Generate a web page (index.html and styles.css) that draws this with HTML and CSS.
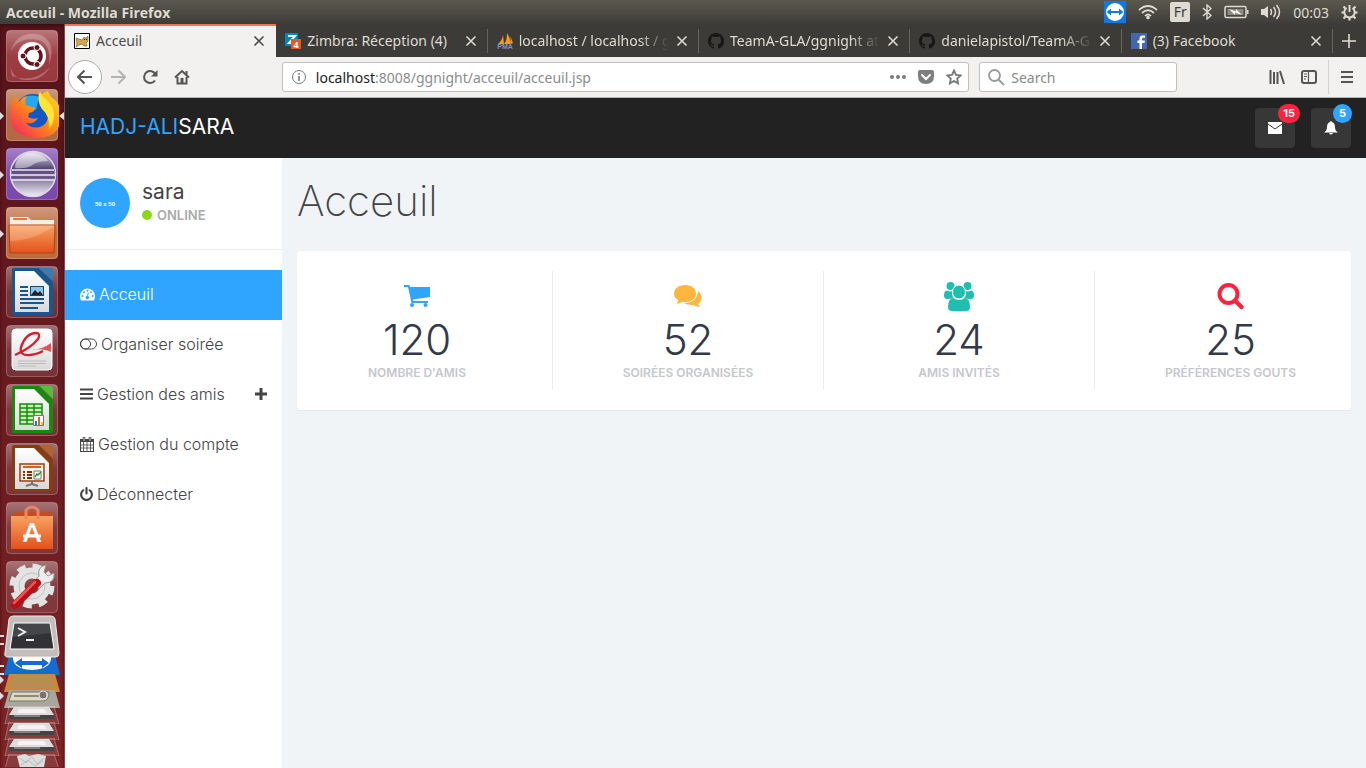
FILE: index.html
```html
<!DOCTYPE html>
<html lang="fr">
<head>
<meta charset="utf-8">
<title>Acceuil</title>
<link rel="stylesheet" href="styles.css">
</head>
<body>
<svg class="defs" width="0" height="0" aria-hidden="true">
  <defs>
    <linearGradient id="gloss" x1="0" y1="0" x2="0" y2="1"><stop offset="0" stop-color="#fff" stop-opacity=".38"/><stop offset=".5" stop-color="#fff" stop-opacity=".12"/><stop offset="1" stop-color="#fff" stop-opacity=".1"/></linearGradient>
    <linearGradient id="orange" x1="0" y1="0" x2="0" y2="1"><stop offset="0" stop-color="#f7a261"/><stop offset="1" stop-color="#e4511b"/></linearGradient>
    <linearGradient id="fox" x1="1" y1="0" x2="0" y2="1"><stop offset="0" stop-color="#ffe226"/><stop offset=".5" stop-color="#ff8a16"/><stop offset="1" stop-color="#f5156c"/></linearGradient>
    <linearGradient id="orb" x1="0" y1="0" x2="0" y2="1"><stop offset="0" stop-color="#e9e4f1"/><stop offset=".4" stop-color="#4b3d69"/><stop offset="1" stop-color="#f2eff7"/></linearGradient>
    <linearGradient id="paper" x1="0" y1="0" x2="0" y2="1"><stop offset="0" stop-color="#fff"/><stop offset="1" stop-color="#d9d9d9"/></linearGradient>
    <symbol id="tile" viewBox="0 0 54 54"><rect x="1.5" y="1.5" width="51" height="51" rx="4" fill="url(#gloss)" stroke="#fff" stroke-opacity=".25"/></symbol>
    <symbol id="close" viewBox="0 0 12 12"><path d="M1.500 1.500l9 9m0-9l-9 9" fill="none" stroke="currentColor" stroke-width="1.600"/></symbol>
    <symbol id="github" viewBox="0 0 16 16"><path fill="#171717" d="M8 0C3.580 0 0 3.580 0 8c0 3.540 2.290 6.530 5.470 7.590.4.070.550-.170.550-.380 0-.190-.010-.820-.010-1.490-2.010.370-2.530-.490-2.690-.940-.090-.230-.480-.940-.820-1.130-.280-.150-.680-.520-.010-.530.630-.010 1.080.580 1.230.820.720 1.210 1.870.870 2.330.660.070-.520.280-.870.510-1.070-1.780-.2-3.640-.890-3.640-3.950 0-.870.310-1.590.820-2.150-.080-.2-.360-1.020.080-2.120 0 0 .670-.210 2.200.820.640-.180 1.320-.270 2-.270.680 0 1.360.090 2 .270 1.530-1.040 2.200-.820 2.200-.820.440 1.100.160 1.920.080 2.120.510.560.820 1.270.820 2.150 0 3.070-1.870 3.750-3.650 3.950.290.250.540.730.540 1.480 0 1.070-.010 1.930-.010 2.200 0 .210.150.460.550.380A8.013 8.013 0 0016 8c0-4.420-3.580-8-8-8z"/></symbol>
    <symbol id="drive" viewBox="0 0 64 18"><path d="M9 0h45l5 18H5z" fill="#fff" fill-opacity=".1" stroke="#fff" stroke-opacity=".3"/><path d="M14 1h35l5 8v3H9V9z" fill="#ddd"/><path d="M9 9h45v4H9z" fill="#444"/><path d="M14 10h26" stroke="#bbb"/><path d="M19 3h25l3 4H17z" fill="#f3f3f3"/></symbol>
  </defs>
</svg>

<header class="panelbar">
  <strong class="window-title">Acceuil - Mozilla Firefox</strong>
  <div class="indicators">
    <svg width="22" height="22" viewBox="0 0 22 22"><path d="M0 0h22v22H0z" fill="#0f7ae5"/><circle cx="11" cy="11" r="9" fill="#fff"/><path d="M2.500 11l4.500-3.500v2.500h8V7.500l4.500 3.500-4.500 3.500V12H7v2.500z" fill="#0f7ae5"/></svg>
    <svg width="20" height="16" viewBox="0 0 20 16" fill="none" stroke="#dfdbd2" stroke-width="1.700"><path d="M1 6q9-8 18 0M4 9q6-5.500 12 0M7 12q3-3 6 0" /><circle cx="10" cy="13.500" r="1" fill="#dfdbd2"/></svg>
    <span class="layout">Fr</span>
    <svg width="10" height="16" viewBox="0 0 10 16" fill="none" stroke="#dfdbd2" stroke-width="1.400"><path d="M1 4l8 7.500L5 15V1l4 3.500L1 12"/></svg>
    <svg width="25" height="14" viewBox="0 0 25 14"><rect x="1" y="1.500" width="21" height="11" rx="1.500" fill="none" stroke="#dfdbd2" stroke-width="1.500"/><path d="M3.500 4h16v6h-16z" fill="#8d8a83"/><path d="M23 5h1.500v4H23z" fill="#dfdbd2"/><path d="M5 4l7 2.500V4l6 6-7-2.500V10z" fill="#f7f5f0"/></svg>
    <svg width="20" height="16" viewBox="0 0 20 16" fill="none" stroke="#dfdbd2" stroke-width="1.500"><path d="M0 5h3l4-3v12l-4-3H0z" fill="#dfdbd2" stroke="none"/><path d="M9.500 5q2 3 0 6M12.500 3q4 5 0 10M15.500 1q6 7 0 14"/></svg>
    <time>00:03</time>
    <svg width="17" height="17" viewBox="0 0 17 17" fill="none" stroke="#dfdbd2"><path d="M5.500 4a5.200 5.200 0 1 0 6 0" stroke-width="2"/><path d="M8.500 1v7" stroke-width="2"/><path d="M.5 8.500h3m10 0h3M2.500 2.500l2 2M14.500 2.500l-2 2M2.500 14.500l2-2M14.500 14.500l-2-2M8.500 13.500v3" stroke-width="2.200"/></svg>
  </div>
</header>

<div class="desktop">
  <nav class="launcher" aria-label="Lanceur">
    <button class="app" aria-label="Ubuntu"><svg viewBox="0 0 54 54"><rect x="1" y="1" width="52" height="52" rx="4" fill="#8e2329"/><path d="M5 24Q12 0 36 6q16 8 8 30 2-21-10-25Q12 7 5 24zm2 23q22 8 38-9-8 14-24 13-12 0-16-14z" fill="#fff" opacity=".25"/><use href="#tile"/><circle cx="27" cy="27" r="14" fill="#fff"/><circle cx="28" cy="27" r="8" fill="none" stroke="#66131b" stroke-width="3.500" stroke-dasharray="14.500 2.250" stroke-dashoffset="7"/><g fill="#66131b" stroke="#fff"><circle cx="18" cy="27" r="3"/><circle cx="32" cy="18.500" r="3"/><circle cx="32" cy="35.500" r="3"/></g></svg></button>
    <button class="app running focused" aria-label="Firefox"><svg viewBox="0 0 54 54"><rect x="1" y="1" width="52" height="52" rx="4" fill="#a9582f"/><use href="#tile"/><circle cx="28" cy="24" r="18" fill="#1257c4"/><path d="M16 12q8-7 18-3l-3 13-9-4z" fill="#25a8f4"/><path d="M9 8q3 2 5 6 3-5 8-6-3 4-1 9l9 3q0 4-6 5l-1 4q5 3 10 1-4 7-12 5 5 6 14 4 9-3 8-14-4-3-8-9-4-9 8-13 1 5 7 9 6 6 6 15 0 22-23 23Q5 49 5 27 5 15 9 8z" fill="url(#fox)"/><path d="M35 3q1 5 7 9 7 6 7 15 0 8-5 14 1-13-7-20-6-9-2-18z" fill="#ffe43a"/></svg></button>
    <button class="app running" aria-label="Eclipse"><svg viewBox="0 0 54 54"><rect x="1" y="1" width="52" height="52" rx="4" fill="#6c33a3"/><use href="#tile"/><circle cx="28" cy="27" r="22.500" fill="url(#orb)" stroke="#ded7e9" stroke-width="1.500"/><path d="M10 21Q11 7 27 6q12 1 16 8-12 0-17 5-6 3-16 2z" fill="#fff" opacity=".45"/><path d="M7 23h42M6 28h44M7 33h42" stroke="#eee9f5" stroke-width="1.500"/><path d="M7 25.500h42M6 30.500h44" stroke="#66508a" stroke-width="2"/></svg></button>
    <button class="app running" aria-label="Fichiers"><svg viewBox="0 0 54 54"><rect x="1" y="1" width="52" height="52" rx="4" fill="#b35b2b"/><use href="#tile"/><path d="M5 19v-8h18l3 3h23v5z" fill="#f5eee6"/><path d="M8 13h14" stroke="#e77a37" stroke-width="2"/><path d="M4 19h46l-1 28H5z" fill="url(#orange)" stroke="#b7400f"/><path d="M5 35Q30 34 49 20v-1H5z" fill="#fff" opacity=".2"/></svg></button>
    <button class="app" aria-label="LibreOffice Writer"><svg viewBox="0 0 54 54"><use href="#tile"/><path d="M7 5q0-2 2-2h25l14 14v31q0 2-2 2H9q-2 0-2-2z" fill="#15588f"/><path d="M35 3h11q2 0 2 2v11z" fill="#367db5"/><path d="M10 6h19l15 15v26H10z" fill="url(#paper)"/><path d="M15 22h8m-8 4h8m-8 4h8m-8 4h24m-24 4h24m-24 5h18" stroke="#15588f" stroke-width="1.800"/><path d="M25 21h14v10H25z" fill="#164a73"/><path d="M26 30v-8h12v8z" fill="#8bc7ec"/><path d="M26 30l4-5 3 3 2-2 3 4z" fill="#222"/></svg></button>
    <button class="app" aria-label="Lecteur PDF"><svg viewBox="0 0 54 54"><use href="#tile"/><rect x="7" y="5" width="40" height="41" rx="4" fill="url(#paper)" stroke="#fff"/><path d="M10 31q16-7 23-16 3-6-2-6-10 0-15 14-2 9 9 8 8-1 13-4" fill="none" stroke="#d51f2b" stroke-width="2.300"/><path d="M25 26q12 0 21-7v9q-8-4-21-2z" fill="#e2525b"/><path d="M13 37h28m-28 2.500h28M13 42h18" stroke="#bbb"/></svg></button>
    <button class="app" aria-label="LibreOffice Calc"><svg viewBox="0 0 54 54"><use href="#tile"/><path d="M7 5q0-2 2-2h25l14 14v31q0 2-2 2H9q-2 0-2-2z" fill="#19880f"/><path d="M35 3h11q2 0 2 2v11z" fill="#54bd3c"/><path d="M10 6h19l15 15v26H10z" fill="url(#paper)"/><path d="M15 21h22v20H15z" fill="#c9f5ad" stroke="#168c12" stroke-width="1.500"/><path d="M15 25h22m-22 4h22m-22 4h22m-22 4h22M22 21v20m7-20v20" stroke="#168c12" stroke-width="1.500"/><path d="M28.500 32.500h10v10h-10z" fill="#fff" stroke="#777"/><path d="M30 38h2v4h-2z" fill="#167bc5"/><path d="M33 34h2v8h-2z" fill="#e56021"/><path d="M36 39h2v3h-2z" fill="#ffc312"/></svg></button>
    <button class="app" aria-label="LibreOffice Impress"><svg viewBox="0 0 54 54"><use href="#tile"/><path d="M7 5q0-2 2-2h25l14 14v31q0 2-2 2H9q-2 0-2-2z" fill="#863c12"/><path d="M35 3h11q2 0 2 2v11z" fill="#b06431"/><path d="M10 6h19l15 15v26H10z" fill="url(#paper)"/><rect x="15" y="22" width="24" height="17" fill="#fff3e9" stroke="#9d3d10" stroke-width="1.500"/><path d="M18 25h18" stroke="#d1651e" stroke-width="2"/><path d="M18 30h2m-2 3h2m-2 3h2m2-6h5m-5 3h5m-5 3h5" stroke="#803000" stroke-width="2"/><path d="M29 29h7v8h-7z" fill="#fff" stroke="#777"/><path d="M30 35l2-3 1 1 3-3" fill="none" stroke="#2a9434" stroke-width="1.500"/><path d="M27 39v3l-6 2m6-2l6 2" stroke="#777" stroke-width="2" fill="none"/></svg></button>
    <button class="app" aria-label="Logiciels Ubuntu"><svg viewBox="0 0 54 54"><use href="#tile"/><path d="M5 15l6-4h34l4 4z" fill="#c64b21"/><path d="M6 15h42v33H6z" fill="url(#orange)"/><path d="M21 18V9q6-6 12 0v9" fill="none" stroke="#f0845c" stroke-width="3"/><text x="27" y="41" class="bag-letter">A</text><path d="M18 35h18" stroke="#fff" stroke-width="3"/></svg></button>
    <button class="app" aria-label="Paramètres"><svg viewBox="0 0 54 54"><use href="#tile"/><circle cx="27" cy="26" r="13" fill="none" stroke="#e3e3e3" stroke-width="11"/><circle cx="27" cy="26" r="20" fill="none" stroke="#e3e3e3" stroke-width="5" stroke-dasharray="8.700 7"/><circle cx="27" cy="26" r="13" fill="none" stroke="#c4c4c4"/><path d="M29 22l5-6q-2-9 7-11l-2 7 4 4 6-3q1 10-9 10l-6 6z" fill="#ededed" stroke="#999"/><path d="M10 45l22-22" stroke="#b80f18" stroke-width="8" stroke-linecap="round"/><path d="M9 43l21-21" stroke="#f0534f" stroke-width="2.500" stroke-linecap="round"/></svg></button>
    <button class="stack terminal double" aria-label="Terminal"><svg viewBox="0 0 64 44"><path d="M13 1h38q3 0 4 3l4 34q0 4-3 4H8q-4 0-3-4l4-34q1-3 4-3z" fill="#c3bebc" stroke="#eee"/><path d="M14 8h36l4 26H10z" fill="#303236" stroke="#fff"/><path d="M14 8h36l2 10-40 4z" fill="#fff" opacity=".1"/><path d="M18 13l7 4-7 4m8 4h8" fill="none" stroke="#eee" stroke-width="2"/></svg></button>
    <button class="stack viewer double" aria-label="TeamViewer"><svg viewBox="0 0 64 20"><path d="M9 0h46l5 20H4z" fill="#126cd2"/><path d="M13 0h38q2 14-19 15Q11 14 13 0z" fill="#fff"/><path d="M15 8l7-5v3h20V3l7 5-7 5v-3H22v3z" fill="#126cd2"/></svg></button>
    <button class="stack running" aria-label="Dossier"><svg viewBox="0 0 64 18"><path d="M9 0h46l5 18H4z" fill="#c9883c"/><path d="M14 1h36l5 13H9z" fill="#b88d54"/></svg></button>
    <button class="stack running" aria-label="Scanner"><svg viewBox="0 0 64 18"><path d="M9 0h46l5 18H4z" fill="#aaa69b"/><path d="M12 2h37q0 9-6 9H9z" fill="#ddd9c4" stroke="#777966"/><path d="M14 6h25" stroke="#86916c" stroke-width="2"/><circle cx="43" cy="5" r="4" fill="#77756d" stroke="#ddd"/></svg></button>
    <button class="stack" aria-label="Disque 1"><svg><use href="#drive"/></svg></button>
    <button class="stack" aria-label="Disque 2"><svg><use href="#drive"/></svg></button>
    <button class="stack" aria-label="Disque 3"><svg><use href="#drive"/></svg></button>
    <button class="stack bin" aria-label="Corbeille"><svg viewBox="0 0 64 18"><path d="M9 0h45l6 18H4z" fill="#fff" fill-opacity=".1" stroke="#fff" stroke-opacity=".3"/><path d="M17 2l8-2 4 2 9-2 8 2-2 11-24 1z" fill="#ddd"/><path d="M20 4l6 5 6-6 5 7 7-6M21 11l7-5 7 6 8-5" stroke="#bbb" fill="none"/></svg></button>
  </nav>

  <div class="browser">
    <div class="tabs">
      <div class="tab active">
        <svg width="16" height="16" viewBox="0 0 16 16"><path d="M.5.5h15v15H.5z" fill="#fff" stroke="#000"/><path d="M2 5l6 2 2-3 1 1h1l2-2v5l-2 2 1 3h-3l-2-2-3 1-3 2 1-3z" fill="#d4a64c" stroke="#705524" stroke-width=".6"/><path d="M10 6.500h1m1 0h1" stroke="#222"/></svg>
        <span class="tab-title whole">Acceuil</span><button class="tab-close" aria-label="Fermer Acceuil"><svg><use href="#close"/></svg></button>
      </div>
      <div class="tab">
        <svg width="16" height="16" viewBox="0 0 16 16"><rect width="13" height="13" rx="1" fill="#0087c3"/><path d="M3 3h7L4 10h5" fill="none" stroke="#fff" stroke-width="2"/><path d="M6 6h10v10H6z" fill="#f05423"/><text x="11" y="15" class="tiny-four">4</text></svg>
        <span class="tab-title whole">Zimbra: Réception (4)</span><button class="tab-close" aria-label="Fermer Zimbra"><svg><use href="#close"/></svg></button>
      </div>
      <div class="tab">
        <svg width="16" height="16" viewBox="0 0 16 16"><path d="M1 11q4-3 5-9l1 9zM7 11q3-3 3-11 4 6 3 11zM13 11q1-3 0-8l3 7z" fill="#f89c1c"/><text x="8" y="16" class="tiny-pma">PMA</text></svg>
        <span class="tab-title">localhost / localhost / g</span><button class="tab-close" aria-label="Fermer localhost"><svg><use href="#close"/></svg></button>
      </div>
      <div class="tab">
        <svg width="16" height="16"><use href="#github"/></svg>
        <span class="tab-title">TeamA-GLA/ggnight at</span><button class="tab-close" aria-label="Fermer TeamA-GLA"><svg><use href="#close"/></svg></button>
      </div>
      <div class="tab">
        <svg width="16" height="16"><use href="#github"/></svg>
        <span class="tab-title">danielapistol/TeamA-G</span><button class="tab-close" aria-label="Fermer danielapistol"><svg><use href="#close"/></svg></button>
      </div>
      <div class="tab">
        <svg width="16" height="16" viewBox="0 0 16 16"><path d="M0 0h16v16H0z" fill="#4267b2"/><path d="M11 16v-6h2.500l.4-2.500H11V6q0-1.200 1.300-1.200H14V2.500h-2.500q-3 0-3 3v2H6.500V10h2v6z" fill="#fff"/></svg>
        <span class="tab-title whole">(3) Facebook</span><button class="tab-close" aria-label="Fermer Facebook"><svg><use href="#close"/></svg></button>
      </div>
      <button class="new-tab" aria-label="Nouvel onglet"><svg width="14" height="14" viewBox="0 0 14 14"><path d="M7 0v14M0 7h14" stroke="currentColor" stroke-width="1.600"/></svg></button>
    </div>

    <div class="toolbar">
      <button class="back" aria-label="Précédent"><svg width="16" height="16" viewBox="0 0 16 16"><path d="M15 8H1.500m6-6.500L1 8l6.500 6.500" /></svg></button>
      <button class="tool faded" aria-label="Suivant"><svg width="16" height="16" viewBox="0 0 16 16"><path d="M1 8h13.500m-6-6.500L15 8l-6.500 6.500"/></svg></button>
      <button class="tool" aria-label="Actualiser"><svg width="16" height="16" viewBox="0 0 16 16"><path d="M13 11.500a6 6 0 1 1 .5-6"/><path d="M15.500 1v6.500H9z" fill="currentColor" stroke="none"/></svg></button>
      <button class="tool" aria-label="Accueil"><svg width="16" height="16" viewBox="0 0 16 16"><path d="M1 8.500L8 2l7 6.500M3.500 8v6.500h9V8M12.500 2v4"/><path d="M6.500 9h3v5h-3z" fill="currentColor" stroke="none"/></svg></button>
      <span class="flex-space"></span>
      <div class="urlbar">
        <svg width="14" height="14" viewBox="0 0 14 14" fill="none" stroke="#777"><circle cx="7" cy="7" r="6.500"/><path d="M7 6v5M7 3v1.700" stroke-width="1.600"/></svg>
        <div class="address"><label for="url">localhost</label><input id="url" value=":8008/ggnight/acceuil/acceuil.jsp"></div>
        <svg width="16" height="16" viewBox="0 0 16 16" fill="#7a7a7a"><circle cx="2" cy="8" r="2"/><circle cx="8" cy="8" r="2"/><circle cx="14" cy="8" r="2"/></svg>
        <svg width="16" height="14" viewBox="0 0 16 14"><path d="M2 0h12q2 0 2 2v4q0 8-8 8T0 6V2q0-2 2-2z" fill="#7e7e7e"/><path d="M4 5l4 4 4-4" fill="none" stroke="#fff" stroke-width="2" stroke-linecap="round"/></svg>
        <svg width="16" height="16" viewBox="0 0 16 16"><path d="M8 1.500l2 4.300 4.700.6-3.500 3.200.9 4.800L8 12l-4.100 2.400.9-4.800-3.500-3.200 4.700-.6z" fill="none" stroke="#777" stroke-width="1.800"/></svg>
      </div>
      <div class="searchbar">
        <svg width="17" height="17" viewBox="0 0 17 17" fill="none" stroke="#999" stroke-width="1.800"><circle cx="6.500" cy="6.500" r="5.500"/><path d="M10.500 10.500l5.500 5.500"/></svg>
        <input type="search" placeholder="Search" aria-label="Search">
      </div>
      <span class="flex-space"></span>
      <button class="tool" aria-label="Bibliothèque"><svg width="16" height="14" viewBox="0 0 16 14"><path d="M1.500 0v14M5 2v12M8.500 2v12M11 1l4 13"/></svg></button>
      <button class="tool" aria-label="Panneau latéral"><svg width="16" height="14" viewBox="0 0 16 14"><rect x="1" y="1" width="14" height="12" rx="2"/><path d="M7.500 1v12M3 4h3M3 6.500h3M3 9h2" stroke-width="1.200"/></svg></button>
      <button class="tool menu" aria-label="Menu"><svg width="12" height="12" viewBox="0 0 12 12"><path d="M0 1h12M0 6h12M0 11h12"/></svg></button>
    </div>

    <div class="site">
      <header class="navbar">
        <a class="brand" href="#"><span>HADJ-ALI</span>SARA</a>
        <button class="notify" aria-label="15 messages"><svg width="14" height="12" viewBox="0 0 14 12"><path d="M0 0h14v12H0z" fill="#fff"/><path d="M0 2l7 5 7-5" fill="none" stroke="#373737"/></svg><span class="badge red">15</span></button>
        <button class="notify" aria-label="5 alertes"><svg width="14" height="14" viewBox="0 0 14 14"><path d="M6 1q1-2 2 0 3 1 3 5 0 4 3 5.500H0Q3 10 3 6q0-4 3-5zM5 12h4q-2 3-4 0z" fill="#fff"/></svg><span class="badge blue">5</span></button>
      </header>
      <div class="content">
        <aside class="sidebar">
          <div class="profile">
            <div class="avatar">50 x 50</div>
            <div><div class="user">sara</div><div class="status">ONLINE</div></div>
          </div>
          <ul class="menu-list">
            <li><a class="current" href="#"><svg width="15" height="13" viewBox="0 0 15 13"><path d="M7.500.5A7.500 7.500 0 0 0 0 8q0 3 1.200 4.500h12.600Q15 11 15 8A7.500 7.500 0 0 0 7.500.5z" fill="currentColor"/><g fill="#30a5ff"><circle cx="2.300" cy="8" r="1"/><circle cx="4" cy="4.300" r="1"/><circle cx="7.500" cy="2.800" r="1"/><circle cx="11" cy="4.300" r="1"/><circle cx="12.700" cy="8" r="1"/><circle cx="7.300" cy="9.500" r="1.800"/></g><path d="M7.300 9.500l1-5" stroke="#30a5ff"/></svg>Acceuil</a></li>
            <li><a href="#"><svg width="17" height="12" viewBox="0 0 17 12" fill="none" stroke="currentColor"><rect x=".5" y="1" width="16" height="10" rx="5"/><circle cx="5.500" cy="6" r="5"/></svg>Organiser soirée</a></li>
            <li><a href="#"><svg width="13" height="12" viewBox="0 0 13 12"><path d="M0 1.500h13M0 6h13M0 10.500h13" stroke="currentColor" stroke-width="2"/></svg>Gestion des amis<svg class="expand" width="12" height="12" viewBox="0 0 12 12"><path d="M6 0v12M0 6h12" stroke="currentColor" stroke-width="3"/></svg></a></li>
            <li><a href="#"><svg width="14" height="15" viewBox="0 0 14 15" fill="none" stroke="currentColor"><rect x=".5" y="2.500" width="13" height="12"/><path d="M0 3.500h14" stroke-width="3"/><path d="M3.500 5v9M7 5v9M10.500 5v9M0 8h14M0 11h14" stroke-width=".8"/><path d="M4 0v4m6-4v4" stroke-width="2.500"/><path d="M4 .5V4m6-3.500V4" stroke="#fff" stroke-width=".8"/></svg>Gestion du compte</a></li>
            <li><a href="#"><svg width="13" height="14" viewBox="128 0 1536 1664"><path fill="currentColor" d="M1664 896q0 156-61 298t-164 245-245 164-298 61-298-61-245-164-164-245-61-298q0-182 80.500-343t226.500-270q43-32 95.500-25t83.500 50q32 42 24.500 94.500t-49.500 84.500q-98 74-151.500 181t-53.500 228q0 104 40.500 198.500t109.500 163.500 163.500 109.500 198.500 40.500 198.500-40.500 163.500-109.500 109.500-163.500 40.500-198.500q0-121-53.500-228t-151.500-181q-42-32-49.500-84.500t24.500-94.500q31-43 84-50t95 25q146 109 226.500 270t80.500 343zm-640-768v640q0 52-38 90t-90 38-90-38-38-90v-640q0-52 38-90t90-38 90 38 38 90z"/></svg>Déconnecter</a></li>
          </ul>
        </aside>
        <main class="main">
          <h1>Acceuil</h1>
          <section class="card">
            <div class="stats">
              <div class="stat"><svg width="28" height="28" viewBox="0 0 28 28" fill="#30a5ff"><path d="M1 3h5.500l.5 2h20v10L10 17.500l.3 1.500H25v2H8.500L5 5H1z"/><circle cx="9" cy="23" r="2"/><circle cx="22.500" cy="23" r="2"/></svg><strong>120</strong><span>NOMBRE D'AMIS</span></div>
              <div class="stat"><svg width="28" height="28" viewBox="0 0 28 28" fill="#ffb53e"><path d="M11.500 3C17.500 3 22 6.500 22 11.500S17.500 20 11 20l-3-.3Q6 21.500 2.500 21.700l2-3.500Q0 16 0 11.500C0 6.500 5 3 11.500 3z"/><path d="M24 9q4 3 3.500 8-.5 3-3.500 5l2 3q-4 0-6-2-6 .5-10-2 13 0 14-12z"/></svg><strong>52</strong><span>SOIRÉES ORGANISÉES</span></div>
              <div class="stat"><svg width="30" height="30" viewBox="0 0 30 30" fill="#1ebfae"><circle cx="6.500" cy="5" r="4"/><circle cx="23.500" cy="5" r="4"/><path d="M3 9.500q4 2 6 0-2 5 1 8l-7 .5q-3 0-3-4t3-4.500zm24 0q-4 2-6 0 2 5-1 8l7 .5q3 0 3-4t-3-4.500z"/><ellipse cx="15" cy="11" rx="6.500" ry="7" stroke="#fff"/><path d="M9 17q6 4 12 0 5 1 5 9 0 4-4 4H8q-4 0-4-4 0-8 5-9z"/></svg><strong>24</strong><span>AMIS INVITÉS</span></div>
              <div class="stat"><svg width="28" height="28" viewBox="0 0 28 28"><circle cx="11.500" cy="12" r="9" fill="none" stroke="#f9243f" stroke-width="4"/><path d="M18.500 19l6 6" stroke="#f9243f" stroke-width="4.500" stroke-linecap="round"/></svg><strong>25</strong><span>PRÉFÉRENCES GOUTS</span></div>
            </div>
          </section>
        </main>
      </div>
    </div>
  </div>
</div>
</body>
</html>
```
FILE: styles.css
```css
* { box-sizing: border-box; }
body {
  margin: 0;
  min-height: 100vh;
  display: flex;
  flex-direction: column;
  font-family: "Noto Sans", sans-serif;
  font-size: 14px;
  color: #444;
}
button { padding: 0; border: 0; background: none; color: inherit; font: inherit; display: flex; align-items: center; justify-content: center; }
input { padding: 0; border: 0; outline: 0; background: none; font: inherit; min-width: 0; }
a { color: inherit; text-decoration: none; }
svg { flex: none; display: block; }
.defs { position: absolute; }

.panelbar {
  height: 24px;
  display: flex;
  align-items: center;
  justify-content: space-between;
  padding: 0 8px 0 6px;
  background: linear-gradient(#5b594e, #3d3c38);
  color: #dfdbd2;
}
.window-title { font-family: "Open Sans", sans-serif; font-size: 14px; }
.indicators { display: flex; align-items: center; gap: 12px; }
.layout { width: 20px; height: 20px; line-height: 20px; border-radius: 2px; background: #dfdbd2; color: #3c3b37; text-align: center; }

.desktop { flex: 1; display: flex; }
.launcher {
  width: 65px;
  flex: none;
  padding-top: 5px;
  background: linear-gradient(#55131a, #7c2426);
  border-right: 1px solid #8a4644;
  box-shadow: inset 0 2px 3px #3c0d12;
  display: flex;
  flex-direction: column;
}
.app, .stack { position: relative; width: 64px; }
.app { height: 59px; align-items: flex-start; }
.app svg { width: 54px; height: 54px; }
.stack { height: 16px; align-items: flex-start; }
.stack svg { width: 64px; height: 18px; }
.stack.terminal { height: 40px; margin-top: -4px; z-index: 1; }
.stack.terminal svg { height: 44px; }
.stack.viewer { height: 19px; }
.stack.viewer svg { height: 20px; }
.stack.bin { height: 13px; overflow: hidden; }
.running::before, .focused::after {
  content: "";
  position: absolute;
  left: 0;
  top: calc(50% - 6px);
  border: 4px solid transparent;
  border-left-color: #ddd;
  border-right: 0;
}
.focused::after { left: auto; right: 0; border-left: 0; border-right: 5px solid #ddd; }
.double::before { content: ""; position: absolute; left: 0; top: 50%; width: 4px; height: 6px; border: solid #ddd; border-width: 2px 0; }

.bag-letter { font: bold 26px Lato, sans-serif; fill: #fff; text-anchor: middle; }
.tiny-four { font: bold 9px "Noto Sans", sans-serif; fill: #fff; text-anchor: middle; }
.tiny-pma { font: bold 7px "Liberation Sans", sans-serif; fill: #8c8fc0; text-anchor: middle; }

.browser { flex: 1; min-width: 0; display: flex; flex-direction: column; }
.tabs { height: 33px; display: flex; background: #3c3b37; color: #dfdbd2; }
.tab { flex: 1; min-width: 0; display: flex; align-items: center; padding: 0 11px 0 9px; position: relative; }
.tab:not(.active)::after { content: ""; position: absolute; right: 0; top: 5px; bottom: 4px; width: 1px; background: #66645e; }
.tab.active { background: linear-gradient(#f07746 2px, #f2f1f0 2px); color: #4c4c4c; }
.tab-title {
  flex: 1;
  margin: 0 7px 0 6px;
  overflow: hidden;
  white-space: nowrap;
  -webkit-mask-image: linear-gradient(to right, #000 80%, transparent);
  mask-image: linear-gradient(to right, #000 80%, transparent);
}
.tab-title.whole { -webkit-mask-image: none; mask-image: none; }
.tab-close, .tab-close svg { width: 12px; height: 12px; }
.new-tab { width: 33px; }

.toolbar {
  height: 41px;
  display: flex;
  align-items: center;
  padding: 0 2px 0 3px;
  background: #f2f1f0;
  border-bottom: 1px solid #b9b7b5;
  color: #555;
}
.toolbar button svg { fill: none; stroke: currentColor; stroke-width: 2; }
.back { width: 34px; height: 34px; border: 1px solid #aaa; border-radius: 50%; background: #fff; }
.tool { width: 32px; height: 34px; }
.tool.faded { color: #b5b3b1; }
.tool.menu { width: 36px; margin-left: 3px; border-left: 1px solid #d3d1cf; }
.flex-space { flex: 1; }
.urlbar, .searchbar {
  height: 30px;
  display: flex;
  align-items: center;
  background: #fff;
  border: 1px solid #c2c0bd;
  border-radius: 3px;
}
.urlbar { flex: 8; padding: 0 6px 0 9px; gap: 12px; }
.address { flex: 1; min-width: 0; display: flex; margin-left: -2px; }
.urlbar label { color: #222; }
.urlbar input { flex: 1; color: #8c8c8c; }
.searchbar { flex: 2; max-width: 198px; margin-left: 10px; padding: 0 8px; gap: 6px; }
.searchbar input { flex: 1; color: #777; }
.searchbar input::placeholder { color: #8a8a8a; }

.site { flex: 1; display: flex; flex-direction: column; font-family: Inter, sans-serif; font-size: 16px; background: #f1f4f7; }
.navbar { height: 60px; display: flex; align-items: center; gap: 16px; padding: 0 15px; background: #222; }
.brand { flex: 1; padding-bottom: 4px; font-size: 21px; color: #fff; }
.brand span { color: #30a5ff; }
.notify { position: relative; width: 40px; height: 40px; border-radius: 4px; background: #373737; }
.badge {
  position: absolute;
  top: -4px;
  right: -5px;
  min-width: 19px;
  height: 19px;
  padding: 0 5px;
  border-radius: 10px;
  color: #fff;
  font-size: 11px;
  font-weight: 700;
  line-height: 19px;
}
.red { background: #f9243f; }
.blue { background: #30a5ff; right: -1px; }

.content { flex: 1; display: flex; }
.sidebar { width: 217px; flex: none; background: #fff; }
.profile { height: 92px; display: flex; gap: 12px; padding: 20px 15px; border-bottom: 1px solid #e9ecf2; }
.avatar { width: 50px; height: 50px; border-radius: 50%; background: #30a5ff; color: #fff; font: bold 6px/52px "Liberation Sans", sans-serif; text-align: center; }
.user { font-size: 21px; line-height: 28px; }
.status { display: flex; align-items: center; gap: 5px; font-size: 13px; font-weight: 600; line-height: 18px; color: #aaa; }
.status::before { content: ""; width: 10px; height: 10px; border-radius: 50%; background: #8ad919; }
.menu-list { list-style: none; margin: 20px 0 0; padding: 0; }
.menu-list a { height: 50px; display: flex; align-items: center; gap: 4px; padding: 0 15px 2px; font-weight: 300; }
.menu-list .current { background: #30a5ff; color: #fff; }
.expand { margin-left: auto; }

.main { flex: 1; min-width: 0; padding: 15px 15px 0; }
h1 { margin: 0 0 22px; font-size: 42px; font-weight: 200; line-height: 56px; }
.card { background: #fff; border-radius: 4px; box-shadow: 0 1px 1px rgba(0, 0, 0, .05); padding: 20px 0; }
.stats { display: grid; grid-template-columns: repeat(4, 1fr); margin: 0 -15px; }
.stat { height: 119px; display: flex; flex-direction: column; align-items: center; padding-top: 10px; border-right: 1px solid #e9ecf2; }
.stat:last-child { border-right: 0; }
.stat svg { height: 30px; }
.stat strong { font-size: 42px; font-weight: 300; line-height: 54px; color: #333a47; margin-top: 2px; }
.stat span { font-size: 12px; font-weight: 600; line-height: 12px; color: #c5c7cc; }
```
